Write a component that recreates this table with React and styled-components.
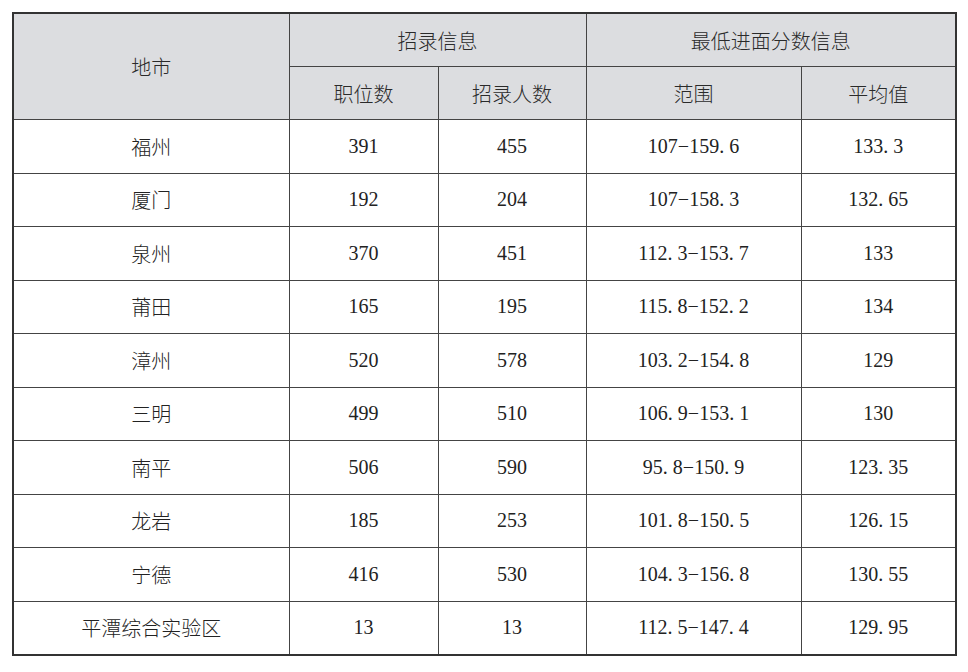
import React from "react";
import styled, { createGlobalStyle } from "styled-components";

const Global = createGlobalStyle`
  html, body { margin: 0; padding: 0; background: #fff; }
  body { font-family: "Liberation Serif", "Noto Sans CJK SC", serif; }
`;

const Page = styled.div`
  padding: 12px 0 0 12px;
`;

const Table = styled.table`
  border-collapse: collapse;
  width: 943px;
  table-layout: fixed;
  border: 2px solid #333;
  font-family: "Liberation Serif", "Noto Sans CJK SC", serif;
  font-size: 20px;
  font-weight: 300;
  color: #222;
`;

const HeadCell = styled.th`
  background: #dcdde0;
  font-weight: 300;
  color: #2a2a2a;
  border: 1px solid #444;
  height: 52px;
  padding: 0;
  text-align: center;
  vertical-align: middle;
`;

const Cell = styled.td`
  border: 1px solid #444;
  height: 52.5px;
  padding: 0;
  text-align: center;
  vertical-align: middle;
  white-space: pre;
`;

const Row = styled.tr``;

const rows = [
  ["福州", "391", "455", "107−159. 6", "133. 3"],
  ["厦门", "192", "204", "107−158. 3", "132. 65"],
  ["泉州", "370", "451", "112. 3−153. 7", "133"],
  ["莆田", "165", "195", "115. 8−152. 2", "134"],
  ["漳州", "520", "578", "103. 2−154. 8", "129"],
  ["三明", "499", "510", "106. 9−153. 1", "130"],
  ["南平", "506", "590", "95. 8−150. 9", "123. 35"],
  ["龙岩", "185", "253", "101. 8−150. 5", "126. 15"],
  ["宁德", "416", "530", "104. 3−156. 8", "130. 55"],
  ["平潭综合实验区", "13", "13", "112. 5−147. 4", "129. 95"],
];

export default function App() {
  return (
    <Page>
      <Global />
      <Table>
        <colgroup>
          <col style={{ width: 276 }} />
          <col style={{ width: 149 }} />
          <col style={{ width: 148 }} />
          <col style={{ width: 215 }} />
          <col style={{ width: 155 }} />
        </colgroup>
        <thead>
          <Row>
            <HeadCell rowSpan={2}>地市</HeadCell>
            <HeadCell colSpan={2}>招录信息</HeadCell>
            <HeadCell colSpan={2}>最低进面分数信息</HeadCell>
          </Row>
          <Row>
            <HeadCell>职位数</HeadCell>
            <HeadCell>招录人数</HeadCell>
            <HeadCell>范围</HeadCell>
            <HeadCell>平均值</HeadCell>
          </Row>
        </thead>
        <tbody>
          {rows.map((r) => (
            <Row key={r[0]}>
              {r.map((c, i) => (
                <Cell key={i}>{c}</Cell>
              ))}
            </Row>
          ))}
        </tbody>
      </Table>
    </Page>
  );
}
